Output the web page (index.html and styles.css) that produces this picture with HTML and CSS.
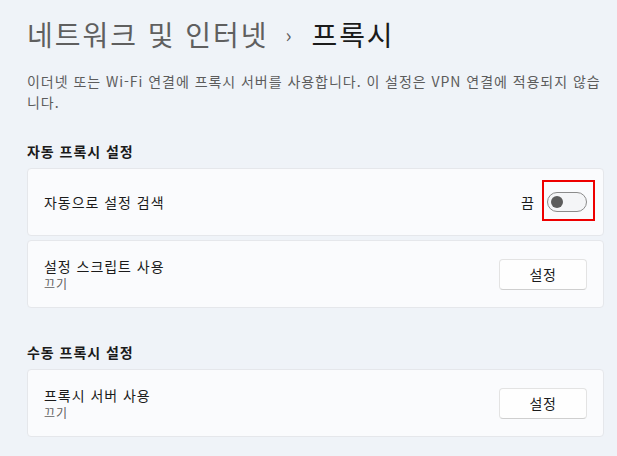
FILE: index.html
```html
<!DOCTYPE html>
<html lang="ko">
<head>
<meta charset="utf-8">
<title>프록시</title>
<link rel="stylesheet" href="styles.css">
</head>
<body>
<main class="page">
  <h1 class="title"><span class="crumb">네트워크 및 인터넷</span><span class="sep">›</span><span class="current">프록시</span></h1>
  <p class="desc">이더넷 또는 Wi-Fi 연결에 프록시 서버를 사용합니다. 이 설정은 VPN 연결에 적용되지 않습니다.</p>

  <section class="group">
    <h2 class="group-title">자동 프록시 설정</h2>
    <div class="cards">
      <div class="card">
        <div class="card-text">
          <div class="card-title">자동으로 설정 검색</div>
        </div>
        <div class="card-action">
          <span class="state">끔</span>
          <span class="toggle-wrap">
            <span class="toggle"><span class="knob"></span></span>
            <span class="highlight"></span>
          </span>
        </div>
      </div>
      <div class="card">
        <div class="card-text">
          <div class="card-title">설정 스크립트 사용</div>
          <div class="card-sub">끄기</div>
        </div>
        <div class="card-action">
          <button class="btn" type="button">설정</button>
        </div>
      </div>
    </div>
  </section>

  <section class="group group-2">
    <h2 class="group-title">수동 프록시 설정</h2>
    <div class="cards">
      <div class="card">
        <div class="card-text">
          <div class="card-title">프록시 서버 사용</div>
          <div class="card-sub">끄기</div>
        </div>
        <div class="card-action">
          <button class="btn" type="button">설정</button>
        </div>
      </div>
    </div>
  </section>
</main>
</body>
</html>
```

FILE: styles.css
```css
html, body {
  margin: 0;
  padding: 0;
}
body {
  background: #eff3f8;
  font-family: "Noto Sans CJK KR", "Noto Sans", sans-serif;
  color: #1b1b1b;
  letter-spacing: 0.06em;
  width: 617px;
  height: 456px;
  overflow: hidden;
}
.page {
  padding: 12px 13px 0 27px;
}
.title {
  margin: 0;
  font-size: 28px;
  line-height: 40px;
  font-weight: 400;
  letter-spacing: 0.07em;
  display: flex;
  align-items: center;
}
.crumb {
  color: #5f5f5f;
}
.sep {
  color: #5f5f5f;
  font-size: 20px;
  margin: 3px 20px 0 17px;
  letter-spacing: 0;
}
.current {
  color: #1b1b1b;
}
.desc {
  margin: 16px 0 0;
  font-size: 14px;
  line-height: 21px;
  color: #5c5c5c;
}
.group {
  margin-top: 28px;
}
.group-2 {
  margin-top: 34px;
}
.group-title {
  margin: 0 0 7px;
  font-size: 14px;
  line-height: 20px;
  font-weight: 600;
  color: #1b1b1b;
}
.cards {
  display: flex;
  flex-direction: column;
  gap: 4px;
}
.card {
  box-sizing: border-box;
  height: 68px;
  background: #fafbfd;
  border: 1px solid #e5e7eb;
  border-radius: 4px;
  display: flex;
  align-items: center;
  justify-content: space-between;
  padding: 0 16px;
}
.card-title {
  font-size: 14px;
  line-height: 20px;
  color: #1b1b1b;
}
.card-sub {
  font-size: 12px;
  line-height: 16px;
  color: #606060;
}
.card-action {
  display: flex;
  align-items: center;
  gap: 13px;
}
.state {
  font-size: 14px;
  line-height: 20px;
  color: #1b1b1b;
  letter-spacing: 0;
}
.toggle-wrap {
  position: relative;
  display: block;
  width: 40px;
  height: 20px;
}
.toggle {
  box-sizing: border-box;
  display: flex;
  align-items: center;
  width: 40px;
  height: 20px;
  border: 1px solid #8b8b8b;
  border-radius: 10px;
  background: #f4f5f7;
  padding-left: 3px;
}
.knob {
  display: block;
  width: 12px;
  height: 12px;
  border-radius: 50%;
  background: #5c5c5c;
}
.highlight {
  position: absolute;
  box-sizing: border-box;
  left: -5px;
  top: -12px;
  width: 53px;
  height: 41px;
  border: 2px solid #ee0000;
}
.btn {
  box-sizing: border-box;
  width: 88px;
  height: 31px;
  background: #fefefe;
  border: 1px solid #e3e3e3;
  border-bottom-color: #cfcfcf;
  border-radius: 4px;
  font-family: "Noto Sans CJK KR", sans-serif;
  font-size: 14px;
  letter-spacing: 0.04em;
  color: #1b1b1b;
  padding: 0;
}
```
